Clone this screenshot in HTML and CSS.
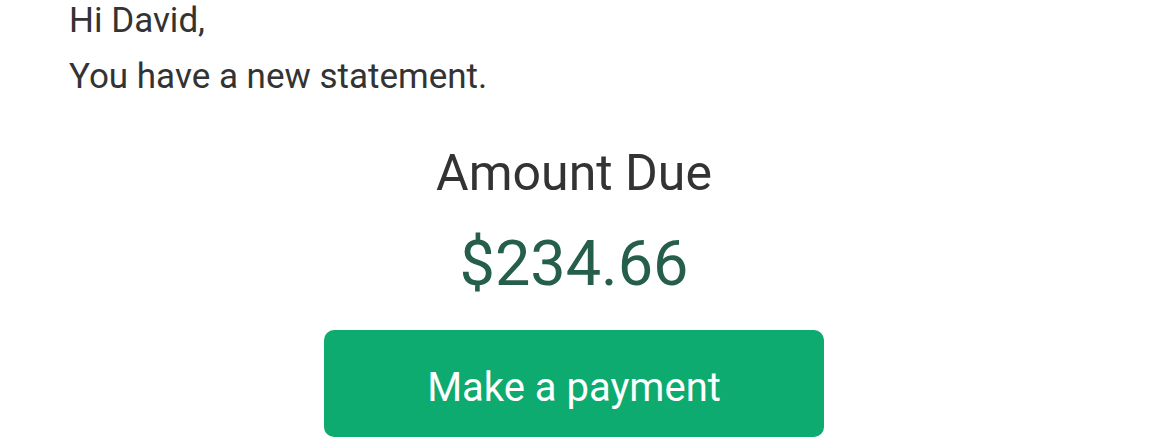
FILE: index.html
```html
<!DOCTYPE html>
<html>
<head>
<meta charset="utf-8">
<link rel="stylesheet" href="styles.css">
</head>
<body>
<div class="email">
  <p class="line greet">Hi David,</p>
  <p class="line intro">You have a new statement.</p>
  <div class="due">
    <div class="due-label">Amount Due</div>
    <div class="due-amount">$234.66</div>
    <a class="pay-btn" href="#">Make a payment</a>
  </div>
</div>
</body>
</html>
```

FILE: styles.css
```css
html, body {
  margin: 0;
  padding: 0;
  background: #ffffff;
}
body {
  font-family: Roboto, "Liberation Sans", sans-serif;
  color: #333333;
}
.email {
  padding: 0 0 0 69px;
}
.line {
  margin: 0;
  font-size: 35px;
  line-height: 42px;
}
.intro {
  margin-top: 14px;
}
.due {
  display: flex;
  flex-direction: column;
  align-items: center;
  margin-top: 45px;
  margin-left: -69px;
  margin-right: 2px;
}
.due-label {
  font-size: 50px;
  line-height: 60px;
  color: #333333;
}
.due-amount {
  font-size: 63px;
  line-height: 74px;
  color: #255e4b;
  margin-top: 24px;
}
.pay-btn {
  box-sizing: border-box;
  display: flex;
  align-items: center;
  justify-content: center;
  width: 500px;
  height: 107px;
  padding-top: 8px;
  margin-top: 29px;
  background: #0dab6f;
  color: #ffffff;
  text-decoration: none;
  border-radius: 10px;
  font-size: 40px;
}
```
